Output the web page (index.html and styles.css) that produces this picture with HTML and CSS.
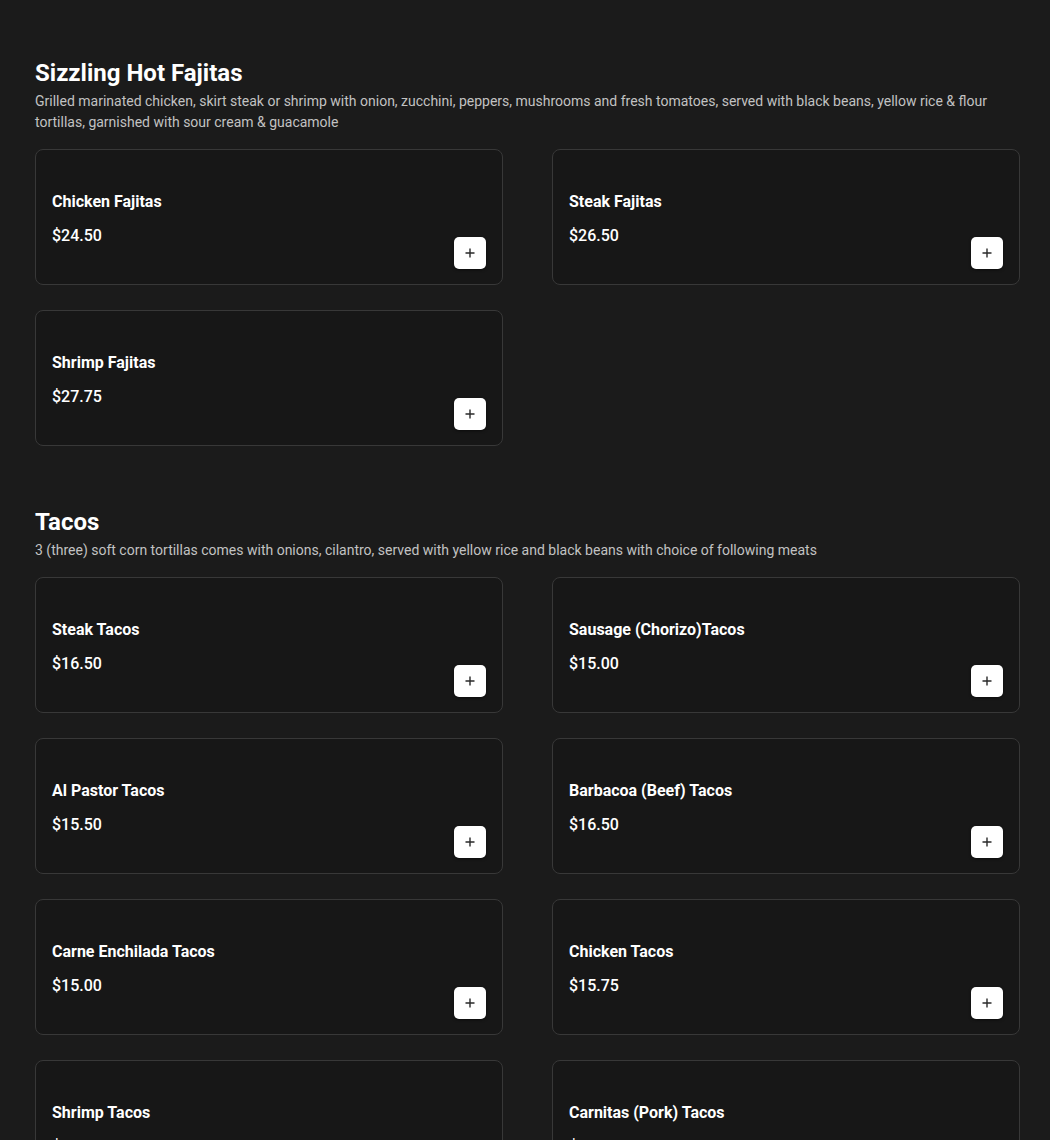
FILE: index.html
```html
<!DOCTYPE html>
<html>
<head>
<meta charset="utf-8">
<link rel="stylesheet" href="styles.css">
</head>
<body>
<main class="menu">
  <section class="category">
    <h2 class="cat-title">Sizzling Hot Fajitas</h2>
    <p class="cat-desc">Grilled marinated chicken, skirt steak or shrimp with onion, zucchini, peppers, mushrooms and fresh tomatoes, served with black beans, yellow rice &amp; flour tortillas, garnished with sour cream &amp; guacamole</p>
    <div class="grid">
      <div class="card"><div class="info"><div class="name">Chicken Fajitas</div><div class="price">$24.50</div></div><button class="add"><svg viewBox="0 0 12 12" width="12" height="12"><path d="M6 1.5v9M1.5 6h9" stroke="#2a2a2a" stroke-width="1.4" fill="none"/></svg></button></div>
      <div class="card"><div class="info"><div class="name">Steak Fajitas</div><div class="price">$26.50</div></div><button class="add"><svg viewBox="0 0 12 12" width="12" height="12"><path d="M6 1.5v9M1.5 6h9" stroke="#2a2a2a" stroke-width="1.4" fill="none"/></svg></button></div>
      <div class="card"><div class="info"><div class="name">Shrimp Fajitas</div><div class="price">$27.75</div></div><button class="add"><svg viewBox="0 0 12 12" width="12" height="12"><path d="M6 1.5v9M1.5 6h9" stroke="#2a2a2a" stroke-width="1.4" fill="none"/></svg></button></div>
    </div>
  </section>
  <section class="category">
    <h2 class="cat-title">Tacos</h2>
    <p class="cat-desc">3 (three) soft corn tortillas comes with onions, cilantro, served with yellow rice and black beans with choice of following meats</p>
    <div class="grid">
      <div class="card"><div class="info"><div class="name">Steak Tacos</div><div class="price">$16.50</div></div><button class="add"><svg viewBox="0 0 12 12" width="12" height="12"><path d="M6 1.5v9M1.5 6h9" stroke="#2a2a2a" stroke-width="1.4" fill="none"/></svg></button></div>
      <div class="card"><div class="info"><div class="name">Sausage (Chorizo)Tacos</div><div class="price">$15.00</div></div><button class="add"><svg viewBox="0 0 12 12" width="12" height="12"><path d="M6 1.5v9M1.5 6h9" stroke="#2a2a2a" stroke-width="1.4" fill="none"/></svg></button></div>
      <div class="card"><div class="info"><div class="name">Al Pastor Tacos</div><div class="price">$15.50</div></div><button class="add"><svg viewBox="0 0 12 12" width="12" height="12"><path d="M6 1.5v9M1.5 6h9" stroke="#2a2a2a" stroke-width="1.4" fill="none"/></svg></button></div>
      <div class="card"><div class="info"><div class="name">Barbacoa (Beef) Tacos</div><div class="price">$16.50</div></div><button class="add"><svg viewBox="0 0 12 12" width="12" height="12"><path d="M6 1.5v9M1.5 6h9" stroke="#2a2a2a" stroke-width="1.4" fill="none"/></svg></button></div>
      <div class="card"><div class="info"><div class="name">Carne Enchilada Tacos</div><div class="price">$15.00</div></div><button class="add"><svg viewBox="0 0 12 12" width="12" height="12"><path d="M6 1.5v9M1.5 6h9" stroke="#2a2a2a" stroke-width="1.4" fill="none"/></svg></button></div>
      <div class="card"><div class="info"><div class="name">Chicken Tacos</div><div class="price">$15.75</div></div><button class="add"><svg viewBox="0 0 12 12" width="12" height="12"><path d="M6 1.5v9M1.5 6h9" stroke="#2a2a2a" stroke-width="1.4" fill="none"/></svg></button></div>
      <div class="card"><div class="info"><div class="name">Shrimp Tacos</div><div class="price">$17.50</div></div><button class="add"><svg viewBox="0 0 12 12" width="12" height="12"><path d="M6 1.5v9M1.5 6h9" stroke="#2a2a2a" stroke-width="1.4" fill="none"/></svg></button></div>
      <div class="card"><div class="info"><div class="name">Carnitas (Pork) Tacos</div><div class="price">$15.50</div></div><button class="add"><svg viewBox="0 0 12 12" width="12" height="12"><path d="M6 1.5v9M1.5 6h9" stroke="#2a2a2a" stroke-width="1.4" fill="none"/></svg></button></div>
    </div>
  </section>
</main>
</body>
</html>
```
FILE: styles.css
```css
html, body {
  margin: 0;
  padding: 0;
  background: #1b1b1b;
  color: #ffffff;
  font-family: Roboto, "Liberation Sans", Arial, sans-serif;
}
.menu {
  padding: 59px 30px 40px 35px;
}
.category + .category {
  margin-top: 62px;
}
.cat-title {
  margin: 0;
  font-size: 24px;
  line-height: 28px;
  font-weight: 700;
  color: #ffffff;
}
.cat-desc {
  margin: 4px 0 0;
  font-size: 14px;
  line-height: 21px;
  color: #c2c2c2;
}
.grid {
  margin-top: 16px;
  display: grid;
  grid-template-columns: 468px 468px;
  column-gap: 49px;
  row-gap: 25px;
}
.card {
  box-sizing: border-box;
  height: 136px;
  border: 1px solid #383838;
  border-radius: 8px;
  background: #171717;
  padding: 41px 16px 15px 16px;
  display: flex;
  justify-content: space-between;
}
.info {
  display: flex;
  flex-direction: column;
}
.name {
  font-size: 16px;
  line-height: 22px;
  font-weight: 700;
}
.price {
  margin-top: 12px;
  font-size: 16px;
  line-height: 22px;
  font-weight: 500;
}
.add {
  align-self: flex-end;
  width: 32px;
  height: 32px;
  border: none;
  border-radius: 5px;
  background: #ffffff;
  box-shadow: 0 1px 3px rgba(0,0,0,0.5);
  display: flex;
  align-items: center;
  justify-content: center;
  padding: 0;
  cursor: pointer;
}
.add svg {
  display: block;
}
```
